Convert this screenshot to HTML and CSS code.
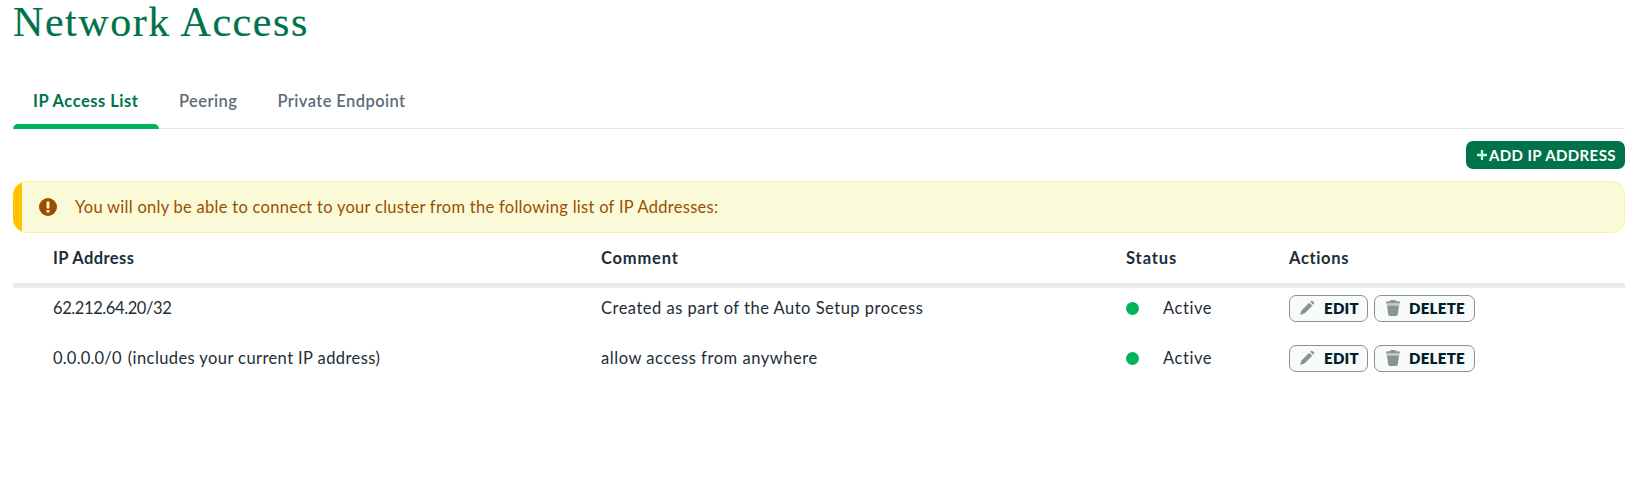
FILE: index.html
```html
<!DOCTYPE html>
<html lang="en">
<head>
<meta charset="utf-8">
<title>Network Access</title>
<link rel="stylesheet" href="styles.css">
</head>
<body>
<svg class="sprite" aria-hidden="true">
  <symbol id="pencil" viewBox="0 0 16 16"><path d="M10.2 2.700l3.100 3.100-7.500 7.500L1 15l1.500-4.600zM11.200 1.800l.9-.9q.7-.6 1.400 0l1.500 1.500q.6.7 0 1.400l-.9.900z"/></symbol>
  <symbol id="trash" viewBox="0 0 14 16"><path d="M4 1.200Q4.200 0 5.200 0h3.600Q9.800 0 10 1.200h2.500Q14 1.200 14 3v.6H0V3Q0 1.200 1.500 1.200z"/><path class="lid" d="M.5 3.600h13v1.800H.5z"/><path d="M1 5.400h12l-1.200 8.800Q11.500 16 10 16H4Q2.500 16 2.200 14.200z"/></symbol>
</svg>
<main class="page">
  <h1 class="title">Network Access</h1>
  <nav class="tabs">
    <a class="tab active"><span class="t-list">IP Access List</span></a>
    <a class="tab"><span class="t-peer">Peering</span></a>
    <a class="tab"><span class="t-end">Private Endpoint</span></a>
  </nav>
  <div class="toolbar">
    <button class="add"><svg class="plus" viewBox="0 0 10 10"><path d="M5 0v10M0 5h10"/></svg><span>ADD IP ADDRESS</span></button>
  </div>
  <div class="banner">
    <svg class="warn" viewBox="0 0 18 18"><circle cx="9" cy="9" r="9"/><path d="M7.600 3.500h2.800v7H7.600zM7.600 12h2.800v2.500H7.600z"/></svg>
    <span class="message">You will only be able to connect to your cluster from the following list of IP Addresses:</span>
  </div>
  <div class="table">
    <div class="row head">
      <span class="h-ip">IP Address</span><span class="h-comment">Comment</span><span class="h-status">Status</span><span class="h-actions">Actions</span>
    </div>
    <div class="row">
      <span class="ip">62.212.64.20/32</span>
      <span class="comment">Created as part of the Auto Setup process</span>
      <span class="status"><i class="dot"></i><span>Active</span></span>
      <span class="actions">
        <button class="btn edit"><svg class="icon"><use href="#pencil"/></svg><span>EDIT</span></button>
        <button class="btn delete"><svg class="icon bin"><use href="#trash"/></svg><span>DELETE</span></button>
      </span>
    </div>
    <div class="row">
      <span class="ip-any"><span class="cidr">0.0.0.0/0</span><span class="note">(includes your current IP address)</span></span>
      <span class="comment-any">allow access from anywhere</span>
      <span class="status"><i class="dot"></i><span>Active</span></span>
      <span class="actions">
        <button class="btn edit"><svg class="icon"><use href="#pencil"/></svg><span>EDIT</span></button>
        <button class="btn delete"><svg class="icon bin"><use href="#trash"/></svg><span>DELETE</span></button>
      </span>
    </div>
  </div>
</main>
</body>
</html>
```
FILE: styles.css
```css
* { box-sizing: border-box; }
body { margin: 0; background: #fff; color: #1c2d38; font: 16.5px/26px Lato, sans-serif; white-space: nowrap; }
button { font: inherit; margin: 0; padding: 0; white-space: nowrap; }
.sprite { display: none; }
.page { padding: 0 18px 0 13px; }
.title { margin: 0; height: 76px; font: 400 42px/44px "Liberation Serif", serif; color: #00734a; letter-spacing: 1.55px; -webkit-text-stroke: 0.2px #00734a; }
.tabs { display: flex; height: 53px; border-bottom: 1px solid #e3ebe8; }
.tab { height: 53px; padding: 12px 20px 0; font-weight: 600; color: #5c6c7a; }
.tab.active { width: 146px; color: #00734a; font-weight: 700; position: relative; }
.tab.active::after { content: ""; position: absolute; left: 0; right: 0; bottom: 0; height: 5px; border-radius: 5px 5px 0 0; background: #00b45a; }
.t-list { letter-spacing: .5px; }
.t-peer { letter-spacing: .45px; }
.t-end { letter-spacing: .42px; }
.toolbar { display: flex; justify-content: flex-end; padding: 12px 0; }
.add { display: flex; align-items: center; width: 159px; height: 28px; padding: 0 0 1px 11px; gap: 2px; border: 0; border-radius: 7px; background: #00734a; color: #fff; font-size: 15px; font-weight: 700; letter-spacing: .4px; }
.plus { width: 10px; height: 10px; stroke: #b9ffe0; stroke-width: 2.300; flex: none; }
.banner { display: flex; align-items: center; height: 52px; padding-left: 26px; border: 1px solid #faf391; border-left: 0; border-radius: 14px; background: linear-gradient(90deg, #ffc300 9px, #fbfad8 9px); color: #994f00; }
.warn { width: 18px; height: 18px; margin-right: 18px; fill: #994f00; }
.warn path { fill: #fbfad8; }
.message { letter-spacing: .28px; }
.row { display: grid; grid-template-columns: 548px 525px 163px 1fr; padding-left: 40px; height: 50px; align-items: start; padding-top: 7px; }
.head { height: 55px; padding-top: 12px; font-weight: 700; border-bottom: 5px solid #e7edeb; }
.h-ip { letter-spacing: .4px; }
.h-comment { letter-spacing: .8px; }
.h-status { letter-spacing: .9px; }
.h-actions { letter-spacing: .65px; }
.ip { letter-spacing: -.4px; }
.comment { letter-spacing: .5px; }
.comment-any { letter-spacing: .55px; }
.cidr { letter-spacing: .2px; }
.note { letter-spacing: .41px; }
.ip-any { display: flex; gap: 6px; }
.status { display: flex; align-items: center; gap: 24px; letter-spacing: .55px; }
.dot { width: 13px; height: 13px; margin-top: 1px; border-radius: 50%; background: #00b45a; }
.actions { display: flex; gap: 6px; }
.btn { display: flex; align-items: center; height: 27px; border: 1px solid #889397; border-radius: 7px; background: #f9fbfa; color: #001e2b; padding: 0 0 2px 9px; font-size: 15px; font-weight: 800; letter-spacing: .3px; }
.edit { width: 79px; gap: 9px; }
.delete { width: 101px; gap: 9px; }
.icon { width: 16px; height: 16px; margin-top: 1px; fill: #889397; flex: none; }
.bin { width: 14px; margin-left: 2px; }
.lid { fill: #c3cacc; }
```
